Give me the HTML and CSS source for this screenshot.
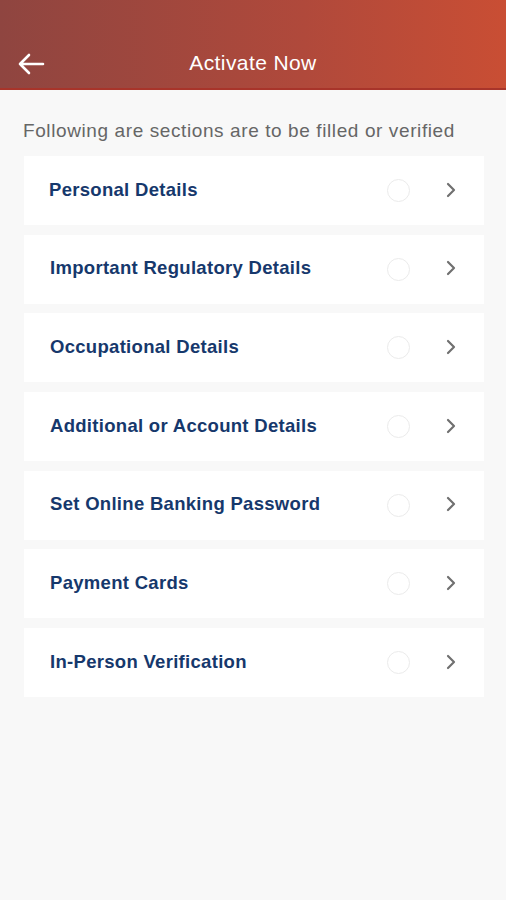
FILE: index.html
```html
<!DOCTYPE html>
<html lang="en">
<head>
    <meta charset="UTF-8">
    <meta name="viewport" content="width=device-width, initial-scale=1.0">
    <title>Activate Now</title>
    <link rel="stylesheet" href="styles.css">
</head>
<body>

    <!-- header -->
    <div class="topbar">
        <svg class="back" width="28" height="22" viewBox="0 0 28 22">
            <path d="M26 11H3M12 2L3 11l9 9" fill="none" stroke="#fff" stroke-width="2.6" stroke-linecap="round" stroke-linejoin="round"/>
        </svg>
        <h1>Activate Now</h1>
    </div>

    <p class="intro">Following are sections are to be filled or verified</p>

    <!-- sections -->
    <div class="sections">
        <div class="section first">
            <span class="name">Personal Details</span>
            <span class="status"></span>
            <svg class="chev" width="10" height="16" viewBox="0 0 10 16"><path d="M2 2l6 6-6 6" fill="none" stroke="#707070" stroke-width="2.2" stroke-linecap="round" stroke-linejoin="round"/></svg>
        </div>
        <div class="section">
            <span class="name">Important Regulatory Details</span>
            <span class="status"></span>
            <svg class="chev" width="10" height="16" viewBox="0 0 10 16"><path d="M2 2l6 6-6 6" fill="none" stroke="#707070" stroke-width="2.2" stroke-linecap="round" stroke-linejoin="round"/></svg>
        </div>
        <div class="section">
            <span class="name">Occupational Details</span>
            <span class="status"></span>
            <svg class="chev" width="10" height="16" viewBox="0 0 10 16"><path d="M2 2l6 6-6 6" fill="none" stroke="#707070" stroke-width="2.2" stroke-linecap="round" stroke-linejoin="round"/></svg>
        </div>
        <div class="section">
            <span class="name">Additional or Account Details</span>
            <span class="status"></span>
            <svg class="chev" width="10" height="16" viewBox="0 0 10 16"><path d="M2 2l6 6-6 6" fill="none" stroke="#707070" stroke-width="2.2" stroke-linecap="round" stroke-linejoin="round"/></svg>
        </div>
        <div class="section">
            <span class="name">Set Online Banking Password</span>
            <span class="status"></span>
            <svg class="chev" width="10" height="16" viewBox="0 0 10 16"><path d="M2 2l6 6-6 6" fill="none" stroke="#707070" stroke-width="2.2" stroke-linecap="round" stroke-linejoin="round"/></svg>
        </div>
        <div class="section">
            <span class="name">Payment Cards</span>
            <span class="status"></span>
            <svg class="chev" width="10" height="16" viewBox="0 0 10 16"><path d="M2 2l6 6-6 6" fill="none" stroke="#707070" stroke-width="2.2" stroke-linecap="round" stroke-linejoin="round"/></svg>
        </div>
        <div class="section">
            <span class="name">In-Person Verification</span>
            <span class="status"></span>
            <svg class="chev" width="10" height="16" viewBox="0 0 10 16"><path d="M2 2l6 6-6 6" fill="none" stroke="#707070" stroke-width="2.2" stroke-linecap="round" stroke-linejoin="round"/></svg>
        </div>
    </div>

</body>
</html>
```

FILE: styles.css
```css
body {
    font-family: "Liberation Sans", Arial, sans-serif;
    margin: 0;
    padding: 0;
    background: #f8f8f8;
    min-height: 900px;
}
.topbar {
    height: 90px;
    background: linear-gradient(90deg, #8f4540 0%, #b0493b 60%, #c94e34 100%);
    border-bottom: 2px solid #a8342a;
    display: flex;
    align-items: flex-end;
    padding: 0 17px 13px;
    box-sizing: border-box;
    position: relative;
}
.back {
    display: block;
}
.topbar h1 {
    position: absolute;
    left: 0;
    right: 0;
    bottom: 13px;
    margin: 0;
    text-align: center;
    font-size: 21px;
    letter-spacing: 0.4px;
    font-weight: normal;
    color: #fff;
}
.intro {
    margin: 30px 0 14px 23px;
    font-size: 19px;
    letter-spacing: 0.6px;
    color: #666;
}
.sections {
    display: flex;
    flex-direction: column;
    gap: 9.7px;
    padding: 0 22px 0 24px;
}
.section {
    height: 69px;
    background: #fff;
    display: flex;
    align-items: center;
    padding: 0 28px 0 26px;
}
.section.first {
    padding-left: 25px;
}
.name {
    flex: 1;
    font-size: 18.5px;
    letter-spacing: 0.3px;
    font-weight: bold;
    color: #16386c;
    margin-top: -2px;
}
.status {
    width: 21px;
    height: 21px;
    border: 1.5px solid #ebebeb;
    border-radius: 50%;
    margin-right: 36px;
}
.chev {
    display: block;
    margin-top: -2px;
}
```
